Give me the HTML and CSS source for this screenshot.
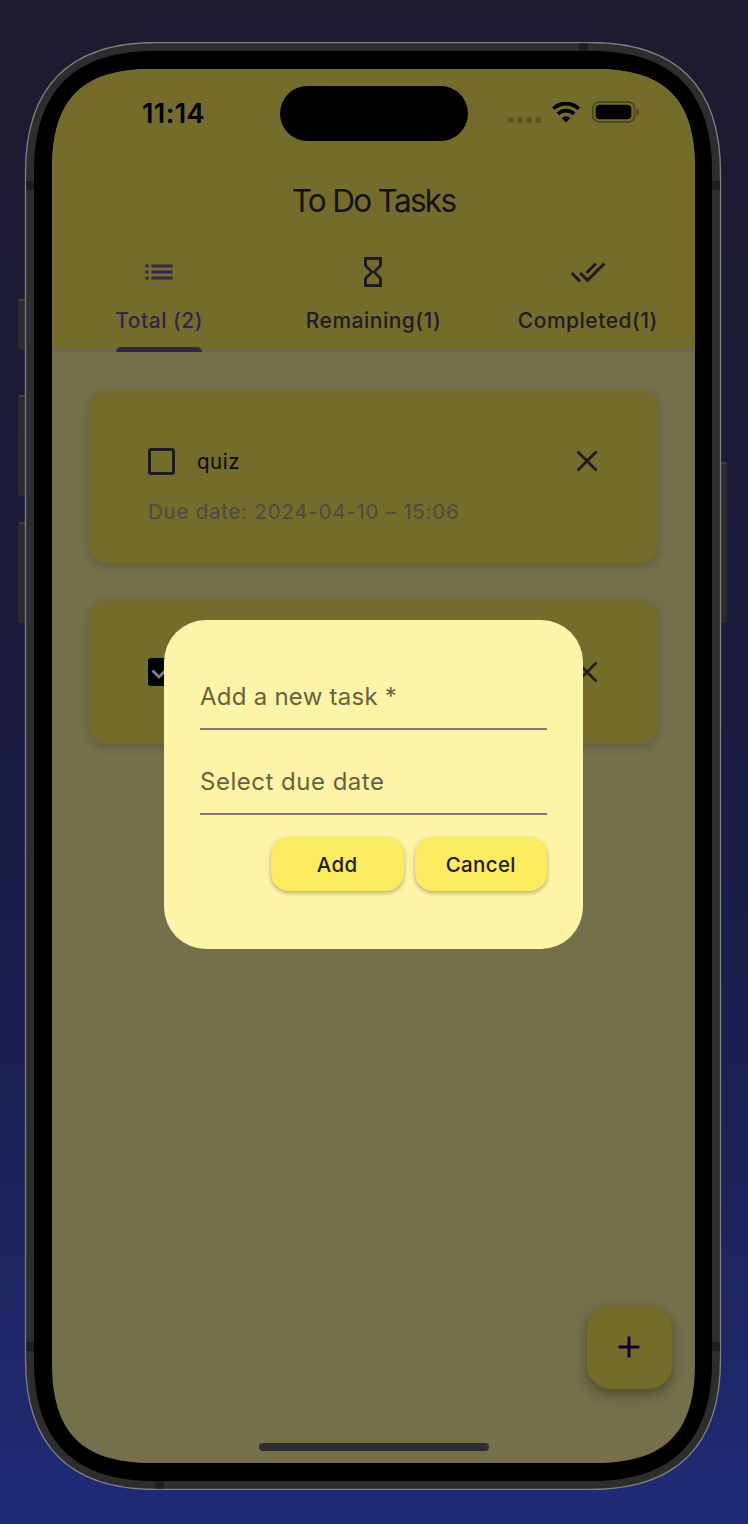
FILE: index.html
```html
<!DOCTYPE html>
<html lang="en">
<head>
<meta charset="utf-8">
<title>To Do Tasks</title>
<link rel="stylesheet" href="styles.css">
</head>
<body>
<div class="phone">
  <svg class="phone-frame" viewBox="0 0 710 1448" width="710" height="1448" aria-hidden="true">
    <g fill="#2b2b2b">
      <rect x="0" y="257" width="10" height="51" rx="1.5"/>
      <rect x="0" y="353" width="10" height="101" rx="1.5"/>
      <rect x="0" y="480" width="10" height="101" rx="1.5"/>
      <rect x="700" y="420" width="9" height="161" rx="1.5"/>
    </g>
    <path d="M1 258h7M1 354h7M1 481h7M702 421h6.500" stroke="#555" stroke-width="1"/>
    <g transform="translate(7.500 .5)">
      <path fill="#2d2d2d" stroke="#808082" stroke-width="1.300" d="M130 0H565c86 0 130 44 130 130V1317c0 86-44 130-130 130H130c-86 0-130-44-130-130V130c0-86 44-130 130-130z"/>
    </g>
    <g fill="#1e1e1e">
      <rect x="561" y="1.500" width="9" height="8"/>
      <rect x="137" y="1438.500" width="9" height="8"/>
      <rect x="8.500" y="139" width="8" height="9"/>
      <rect x="8.500" y="1300" width="8" height="9"/>
      <rect x="694" y="139" width="8" height="9"/>
      <rect x="694" y="1300" width="8" height="9"/>
    </g>
    <g transform="translate(16 9)">
      <path fill="#000" d="M120 0H558c80 0 120 40 120 120V1310c0 80-40 120-120 120H120c-80 0-120-40-120-120V120c0-80 40-120 120-120z"/>
    </g>
  </svg>

  <main class="screen">
    <header class="header">
      <div class="status">
        <span class="clock">11:14</span>
        <span class="island"></span>
        <span class="indicators">
          <span class="signal"><i></i><i></i><i></i><i></i></span>
          <svg class="wifi" viewBox="0 0 28 21" width="28" height="21">
            <g fill="none" stroke="#000">
              <path d="M1.300 6.800a18 18 0 0 1 25.400 0" stroke-width="3.700"/>
              <path d="M5.900 11.900a11.500 11.500 0 0 1 16.200 0" stroke-width="3.700"/>
            </g>
            <path d="M9.800 16a6 6 0 0 1 8.400 0L14 20.400z"/>
          </svg>
          <svg class="battery" viewBox="0 0 48 22" width="48" height="22">
            <rect x="1" y="1" width="41.500" height="20" rx="6" fill="none" stroke="#474119" stroke-width="1.500"/>
            <rect x="3.700" y="3.700" width="35.600" height="14.600" rx="4"/>
            <path d="M44.500 7.500c3 1.500 3 5.500 0 7z" fill="#474119"/>
          </svg>
        </span>
      </div>
      <h1 class="title">To Do Tasks</h1>
      <nav class="tabs">
        <a class="tab tab-active">
          <svg class="tab-icon" viewBox="0 0 24 24"><path d="M3 13h2v-2H3v2zm0 4h2v-2H3v2zm0-8h2V7H3v2zm4 4h14v-2H7v2zm0 4h14v-2H7v2zM7 7v2h14V7H7z"/></svg>
          <span class="tab-label">Total (2)</span>
        </a>
        <a class="tab">
          <svg class="tab-icon" viewBox="0 0 24 24"><path d="M6 2v6h.01L6 8.010 10 12l-4 4 .01.01H6V22h12v-5.990h-.01L18 16l-4-4 4-3.990-.01-.01H18V2H6zm10 14.500V20H8v-3.500l4-4 4 4zm-4-5l-4-4V4h8v3.500l-4 4z"/></svg>
          <span class="tab-label">Remaining(1)</span>
        </a>
        <a class="tab">
          <svg class="tab-icon" viewBox="0 0 24 24"><path d="M18 7l-1.410-1.410-6.340 6.340 1.410 1.410L18 7zm4.240-1.410L11.660 16.170 7.480 12l-1.410 1.410L11.660 19l12-12-1.420-1.410zM.41 13.410L6 19l1.410-1.410L1.830 12 .41 13.410z"/></svg>
          <span class="tab-label">Completed(1)</span>
        </a>
      </nav>
    </header>

    <section class="tasks">
      <article class="task">
        <div class="task-row">
          <span class="check"></span>
          <span class="task-name">quiz</span>
          <svg class="close" viewBox="0 0 22 22" width="22" height="22"><path d="M1.500 1.500l19 19M20.500 1.500l-19 19"/></svg>
        </div>
        <p class="due">Due date: 2024-04-10 – 15:06</p>
      </article>
      <article class="task task-done">
        <div class="task-row">
          <svg class="checked" viewBox="0 0 28 28" width="28" height="28"><rect width="28" height="28" rx="3"/><path d="M4.500 12.500l6.500 6.500L23.500 6.500" fill="none" stroke="#7d7d7d" stroke-width="3"/></svg>
          <svg class="close" viewBox="0 0 22 22" width="22" height="22"><path d="M1.500 1.500l19 19M20.500 1.500l-19 19"/></svg>
        </div>
      </article>
    </section>

    <div class="fab"><svg viewBox="0 0 22 22" width="22" height="22"><path d="M11 .5v21M.5 11h21" stroke="#150026" stroke-width="3"/></svg></div>
    <div class="home-bar"></div>

    <form class="dialog">
      <div class="field"><span class="label-task">Add a new task *</span></div>
      <div class="field"><span class="label-date">Select due date</span></div>
      <div class="actions">
        <button type="button" class="btn">Add</button>
        <button type="button" class="btn">Cancel</button>
      </div>
    </form>
  </main>
</div>
</body>
</html>
```
FILE: styles.css
```css
* { box-sizing: border-box; }

body {
  margin: 0;
  width: 748px;
  height: 1524px;
  padding: 42px 0 0 18px;
  overflow: hidden;
  background: linear-gradient(180deg, #1e1b30 0%, #1c1b35 22%, #1b1b3e 45%, #1c2050 68%, #1e2663 87%, #1f2a74 97%, #1f2a75 100%);
  font-family: Inter, "Liberation Sans", sans-serif;
  color: #1f1c20;
}

.phone {
  position: relative;
  width: 710px;
  height: 1448px;
  padding: 27px 33px 0 34px;
}

.phone-frame { position: absolute; inset: 0; }

.screen {
  position: relative;
  display: flex;
  flex-direction: column;
  width: 643px;
  height: 1394px;
  background: #73704b;
  clip-path: path("M100 0H543c70 0 100 30 100 100V1294c0 70-30 100-100 100H100c-70 0-100-30-100-100V100c0-70 30-100 100-100z");
}

.header {
  height: 283px;
  background: #746c2a;
  border-bottom: 2px solid #6a6560;
}

.status {
  display: grid;
  grid-template-columns: 227.500px 188px 1fr;
  height: 88px;
  padding-top: 17px;
}

.clock {
  padding: 10px 0 0 90px;
  font-size: 27px;
  line-height: 36px;
  font-weight: 600;
  letter-spacing: 0.4px;
  color: #000;
}

.island { height: 55px; border-radius: 28px; background: #000; }

.indicators {
  display: flex;
  align-items: flex-start;
  padding: 15px 0 0 40.500px;
}

.signal { display: flex; gap: 3px; margin: 16px 11px 0 0; }
.signal i { width: 6px; height: 6px; border-radius: 2.500px; background: #5b5421; }
.wifi { margin: 0.5px 12px 0 0; }

.title {
  margin: 24px 0 0;
  font-size: 31.500px;
  line-height: 40px;
  font-weight: 400;
  letter-spacing: -1.7px;
  text-align: center;
  color: #131214;
}

.tabs {
  display: grid;
  grid-template-columns: repeat(3, 1fr);
  height: 130px;
  padding-top: 33px;
}

.tab {
  position: relative;
  display: flex;
  flex-direction: column;
  align-items: center;
  height: 98px;
  white-space: nowrap;
}

.tab-icon { width: 36px; height: 36px; fill: #1f1c20; }
.tab-label { margin-top: 17px; font-size: 21px; line-height: 28px; font-weight: 450; letter-spacing: 0.5px; }
.tab-active { color: #30254b; }
.tab-active .tab-icon { fill: #30254b; }
.tab-active::after {
  content: "";
  position: absolute;
  bottom: 0;
  left: 64px;
  width: 86px;
  height: 5px;
  border-radius: 5px 5px 0 0;
  background: #30254b;
}

.tasks {
  display: flex;
  flex-direction: column;
  gap: 37px;
  padding: 38px 37px 0;
}

.task {
  height: 173px;
  padding: 57px 58px 0 59px;
  border-radius: 18px;
  background: #746c2a;
  box-shadow: 0 3px 9px rgba(65, 61, 52, .36);
}

.task-done { height: 144px; padding-top: 58px; }
.task-row { display: flex; align-items: center; height: 28px; }
.check { width: 27px; height: 27px; margin-left: -0.5px; border: 3px solid #1f1c20; border-radius: 3px; }
.task-name { margin-left: 22.500px; font-size: 20.500px; letter-spacing: 0.5px; color: #090909; }
.close { margin-left: auto; margin-right: 2.500px; fill: none; stroke: #1f1c20; stroke-width: 2.700; }
.due { margin: 23px 0 0; font-size: 20.500px; line-height: 28px; letter-spacing: 0.76px; color: #4d4a45; white-space: nowrap; }

.fab {
  position: absolute;
  left: 535px;
  top: 1235.500px;
  display: grid;
  place-items: center;
  width: 84.500px;
  height: 84px;
  border-radius: 24px;
  background: #746c2a;
  box-shadow: 0 6px 13px rgba(40, 38, 25, .4), 0 2px 5px rgba(40, 38, 25, .15);
}

.home-bar { width: 230px; height: 8px; margin: auto auto 12px 206.500px; border-radius: 4px; background: #2e2d2e; }

.dialog {
  position: absolute;
  left: 112px;
  top: 551px;
  width: 419px;
  height: 329px;
  padding: 25px 36px 0;
  border-radius: 42px;
  background: #fdf4a8;
}

.field {
  height: 85px;
  padding-top: 36px;
  border-bottom: 2px solid #85797d;
  font-size: 24px;
  line-height: 32px;
  color: #67633e;
  white-space: nowrap;
}

.label-task { letter-spacing: 0.25px; }
.label-date { letter-spacing: 0.5px; }

.actions { display: flex; justify-content: flex-end; gap: 11px; margin-top: 22px; }

.btn {
  width: 132.500px;
  height: 54px;
  padding: 1px 0 0;
  border: 0;
  border-radius: 18px;
  background: #fbeb5f;
  box-shadow: 0 2px 4px rgba(80, 75, 35, .42);
  font: 450 20.500px/54px Inter, "Liberation Sans", sans-serif;
  letter-spacing: 0.35px;
  color: #1f1c10;
}
```
